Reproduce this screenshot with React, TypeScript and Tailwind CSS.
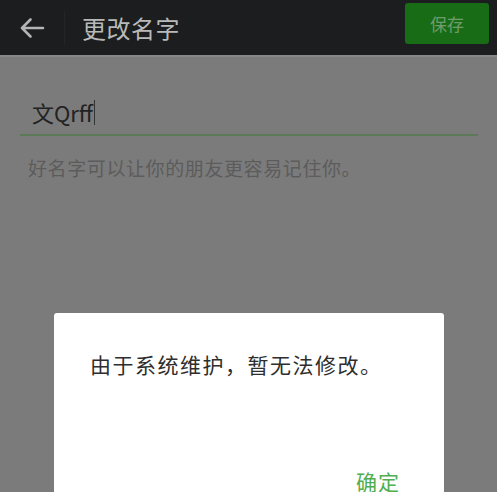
import React from "react";

export default function App() {
  const font = { fontFamily: '"Noto Sans CJK SC", "Liberation Sans", sans-serif' };
  return (
    <div
      className="relative w-[497px] h-[492px] overflow-hidden bg-[#7b7b7b] flex flex-col"
      style={font}
    >
      <div className="h-[55px] bg-[#1b1d1e] flex items-center shrink-0">
        <div className="w-[64px] h-full flex items-center pl-[19px]">
          <svg width="26" height="22" viewBox="0 0 26 22" fill="none">
            <path
              d="M24 11 H3 M11.5 2.5 L3 11 L11.5 19.5"
              stroke="#b4b4b4"
              strokeWidth="2.6"
              strokeLinecap="round"
              strokeLinejoin="round"
            />
          </svg>
        </div>
        <div className="w-px h-[34px] bg-[#232526]" />
        <div className="ml-[17px] text-[24px] leading-none text-[#b9b9b9] tracking-[0.5px]">
          更改名字
        </div>
        <div className="flex-1" />
        <div className="self-start mt-[3px] mr-[8px] w-[84px] h-[41px] rounded-[3px] bg-[#186c16] flex items-center justify-center text-[17px] text-[#6f9c6b]">
          保存
        </div>
      </div>
      <div className="h-[2px] bg-[#878787] shrink-0" />
      <div className="px-[20px] pr-[19px] pt-[39px]">
        <div className="pl-[12px] h-[32px] flex items-center text-[22px] text-[#222222]">
          <span>文Qrff</span>
          <span className="inline-block w-px h-[25px] bg-[#333333] ml-[1px]" />
        </div>
        <div className="mt-[6px] h-[2px] bg-[#5c7a57]" />
      </div>
      <div className="pl-[28px] pt-[19px] text-[19px] leading-[26px] text-[#5c5c5c] tracking-[0.6px]">
        好名字可以让你的朋友更容易记住你。
      </div>

      <div className="absolute left-[54px] top-[313px] w-[390px] h-[200px] bg-white rounded-[3px] flex flex-col">
        <div className="pl-[36px] pt-[37px] text-[21px] leading-[28px] text-[#2e2e2e] tracking-[1.5px]">
          由于系统维护，暂无法修改。
        </div>
        <div className="flex justify-end pr-[44px] mt-[88px] text-[21px] leading-[30px] text-[#4fae50] tracking-[1px]">
          确定
        </div>
      </div>
    </div>
  );
}
